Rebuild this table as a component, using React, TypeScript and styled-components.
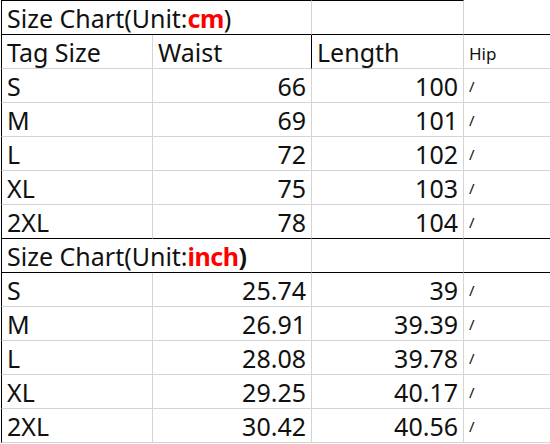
import React from 'react'
import styled, { createGlobalStyle } from 'styled-components'

const GlobalStyle = createGlobalStyle`
  html, body {
    margin: 0;
    padding: 0;
    background: #ffffff;
  }
  body {
    font-family: 'Noto Sans', 'Open Sans', 'Liberation Sans', sans-serif;
    color: #111111;
  }
`

const GRID = '#d4d4d4'
const INK = '#000000'

const Sheet = styled.div`
  display: grid;
  grid-template-columns: 152px 159px 152px 87px;
  grid-template-rows: 35px;
  grid-auto-rows: 34px;
  width: 550px;
  padding-left: 1px;
  box-sizing: border-box;
`

type CellProps = {
  $span?: number
  $right?: boolean
  $top?: boolean
  $heavyBottom?: boolean
  $heavyRight?: boolean
  $first?: boolean
  $last?: boolean
  $small?: boolean
}

const Cell = styled.div<CellProps>`
  grid-column: span ${p => p.$span ?? 1};
  box-sizing: border-box;
  display: flex;
  align-items: flex-end;
  justify-content: ${p => (p.$right ? 'flex-end' : 'flex-start')};
  padding: 0 ${p => (p.$right ? '5px' : '4px')} ${p => (p.$small ? '6px' : '3px')} ${p => (p.$right ? '4px' : '5px')};
  font-size: ${p => (p.$small ? '17px' : '25px')};
  line-height: 1;
  white-space: nowrap;
  overflow: visible;
  border-top: ${p => (p.$top ? `1px solid ${INK}` : 'none')};
  border-bottom: 1px solid ${p => (p.$heavyBottom ? INK : GRID)};
  border-right: ${p => (p.$last ? 'none' : `1px solid ${p.$heavyRight ? INK : GRID}`)};
  border-left: ${p => (p.$first ? `1px solid ${INK}` : 'none')};
`

const Unit = styled.span`
  color: #ff0000;
  font-weight: 700;
  letter-spacing: -0.5px;
`

const Paren = styled.span<{ $bold?: boolean }>`
  font-weight: ${p => (p.$bold ? 700 : 400)};
`

const Slash = styled.span`
  font-size: 15px;
  padding-bottom: 2px;
`

type Row = [string, string, string]

const cmRows: Row[] = [
  ['S', '66', '100'],
  ['M', '69', '101'],
  ['L', '72', '102'],
  ['XL', '75', '103'],
  ['2XL', '78', '104'],
]

const inchRows: Row[] = [
  ['S', '25.74', '39'],
  ['M', '26.91', '39.39'],
  ['L', '28.08', '39.78'],
  ['XL', '29.25', '40.17'],
  ['2XL', '30.42', '40.56'],
]

const TitleRow: React.FC<{ unit: string; first?: boolean; boldParen?: boolean }> = ({
  unit,
  first,
  boldParen,
}) => (
  <>
    <Cell $span={2} $first $top={first} $heavyBottom>
      Size Chart(Unit:<Unit>{unit}</Unit>
      <Paren $bold={boldParen}>)</Paren>
    </Cell>
    <Cell $top={first} $heavyBottom />
    <Cell $last $heavyBottom />
  </>
)

const DataRows: React.FC<{ rows: Row[]; lastHeavy?: boolean }> = ({ rows, lastHeavy }) => (
  <>
    {rows.map(([size, waist, length], i) => {
      const heavy = lastHeavy && i === rows.length - 1
      return (
        <React.Fragment key={size}>
          <Cell $first $heavyBottom={heavy}>
            {size}
          </Cell>
          <Cell $right $heavyBottom={heavy}>
            {waist}
          </Cell>
          <Cell $right $heavyBottom={heavy}>
            {length}
          </Cell>
          <Cell $last $small $heavyBottom={heavy}>
            <Slash>/</Slash>
          </Cell>
        </React.Fragment>
      )
    })}
  </>
)

const App: React.FC = () => (
  <>
    <GlobalStyle />
    <Sheet>
      <TitleRow unit="cm" first />
      <Cell $first>Tag Size</Cell>
      <Cell $heavyRight>Waist</Cell>
      <Cell>Length</Cell>
      <Cell $last $small>
        Hip
      </Cell>
      <DataRows rows={cmRows} lastHeavy />
      <TitleRow unit="inch" boldParen />
      <DataRows rows={inchRows} />
    </Sheet>
  </>
)

export default App
